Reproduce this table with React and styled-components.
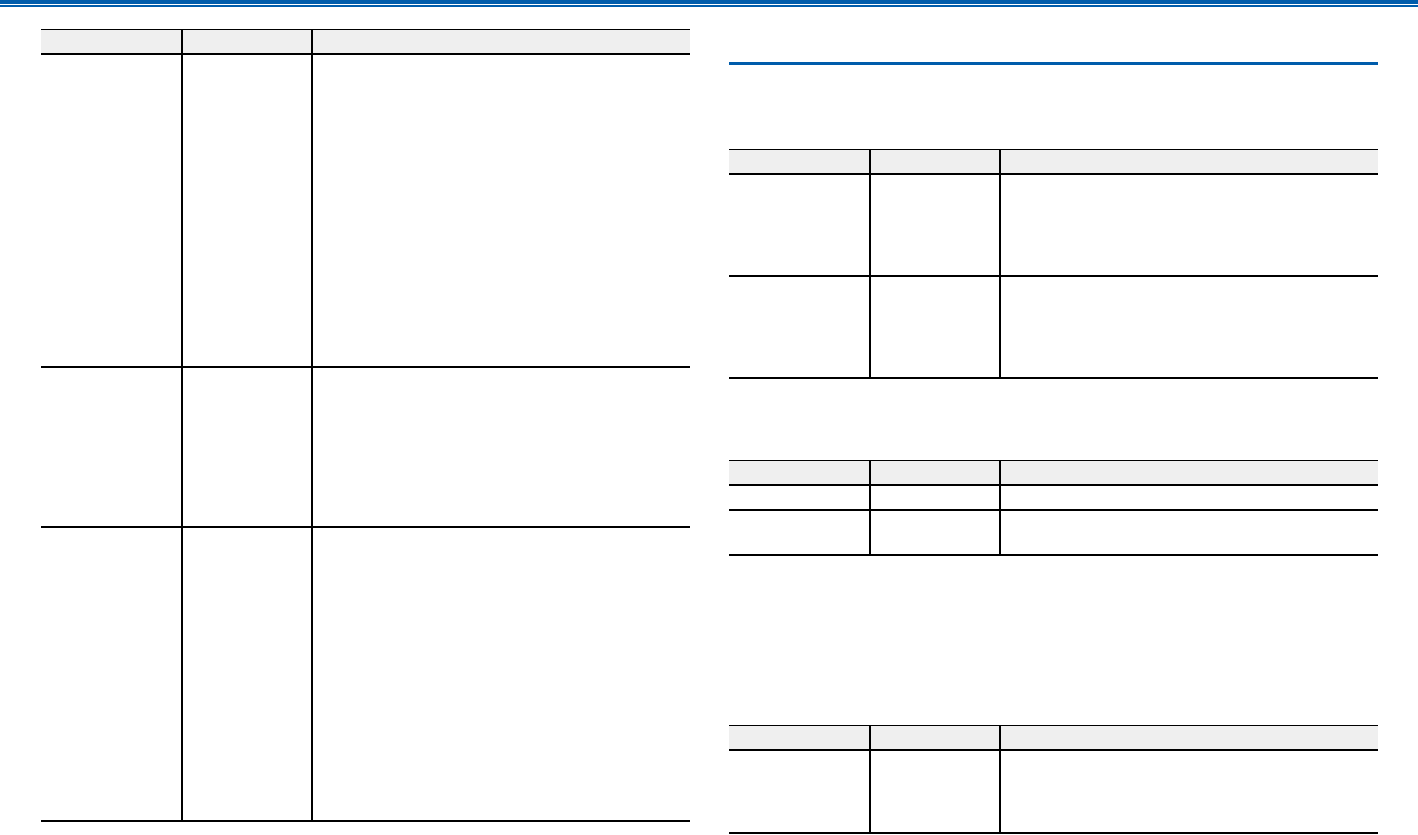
import React from "react";
import styled, { createGlobalStyle } from "styled-components";

const Global = createGlobalStyle`
  html, body { margin: 0; padding: 0; background: #fff; }
  body { font-family: "Liberation Sans", Arial, sans-serif; }
`;

const BLUE = "#005cab";

const Page = styled.div`
  width: 1418px;
  height: 835px;
  overflow: hidden;
  background: #fff;
`;

const TopBar = styled.div`
  height: 4px;
  background: ${BLUE};
  border-bottom: 1px solid #fff;
`;

const TopStripe = styled.div`
  height: 2px;
  background: ${BLUE};
`;

const Columns = styled.div`
  display: grid;
  grid-template-columns: 649px 649px;
  column-gap: 39px;
  padding-left: 41px;
`;

const Column = styled.section`
  display: flex;
  flex-direction: column;
`;

const SectionRule = styled.div`
  margin-top: ${(p) => p.$top}px;
  height: 3px;
  background: ${BLUE};
`;

const Table = styled.div`
  margin-top: ${(p) => p.$top}px;
  border-top: 1px solid #000;
  display: flex;
  flex-direction: column;
`;

const Row = styled.div`
  display: grid;
  grid-template-columns: 141px 130px 1fr;
  height: ${(p) => p.$h}px;
  box-sizing: border-box;
  border-bottom: 2px solid #000;
  background: ${(p) => (p.$head ? "#efefef" : "#fff")};
`;

const Cell = styled.div`
  border-left: ${(p) => (p.$first ? "none" : "2px solid #000")};
  margin-left: ${(p) => (p.$first ? 0 : -1)}px;
`;

function DataTable({ top, rows }) {
  return (
    <Table $top={top}>
      <Row $head $h={25}>
        <Cell $first />
        <Cell />
        <Cell />
      </Row>
      {rows.map((h, i) => (
        <Row key={i} $h={h}>
          <Cell $first />
          <Cell />
          <Cell />
        </Row>
      ))}
    </Table>
  );
}

export default function App() {
  return (
    <Page>
      <Global />
      <TopBar />
      <TopStripe />
      <Columns>
        <Column>
          <DataTable top={22} rows={[313, 160, 294]} />
        </Column>
        <Column>
          <SectionRule $top={55} />
          <DataTable top={84} rows={[102, 102]} />
          <DataTable top={81} rows={[25, 45]} />
          <DataTable top={169} rows={[83]} />
        </Column>
      </Columns>
    </Page>
  );
}
